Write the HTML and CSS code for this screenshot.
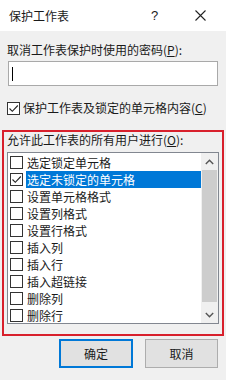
FILE: index.html
```html
<!DOCTYPE html>
<html lang="zh">
<head>
<meta charset="utf-8">
<link rel="stylesheet" href="styles.css">
</head>
<body>
<div class="dialog">
  <div class="titlebar">
    <span class="title">保护工作表</span>
    <span class="help">?</span>
    <span class="close"><svg width="11" height="11" viewBox="0 0 11 11"><path d="M0.5 0.5 L10.5 10.5 M10.5 0.5 L0.5 10.5" stroke="#222" stroke-width="1.1" fill="none"/></svg></span>
  </div>
  <div class="content">
    <div class="label">取消工作表保护时使用的密码(<u>P</u>):</div>
    <div class="input"><span class="caret"></span></div>
    <div class="chkrow">
      <span class="cb checked"><svg width="11" height="11" viewBox="0 0 11 11"><path d="M1.5 5.5 L4.3 8.3 L9.8 2.5" stroke="#222" stroke-width="1.1" fill="none"/></svg></span>
      <span>保护工作表及锁定的单元格内容(<u>C</u>)</span>
    </div>
    <div class="redbox">
      <div class="label2">允许此工作表的所有用户进行(<u>O</u>):</div>
      <div class="list">
        <div class="items">
          <div class="item"><span class="cb"></span><span class="txt">选定锁定单元格</span></div>
          <div class="item"><span class="cb checked"><svg width="11" height="11" viewBox="0 0 11 11"><path d="M1.5 5.5 L4.3 8.3 L9.8 2.5" stroke="#222" stroke-width="1.1" fill="none"/></svg></span><span class="txt sel">选定未锁定的单元格</span></div>
          <div class="item"><span class="cb"></span><span class="txt">设置单元格格式</span></div>
          <div class="item"><span class="cb"></span><span class="txt">设置列格式</span></div>
          <div class="item"><span class="cb"></span><span class="txt">设置行格式</span></div>
          <div class="item"><span class="cb"></span><span class="txt">插入列</span></div>
          <div class="item"><span class="cb"></span><span class="txt">插入行</span></div>
          <div class="item"><span class="cb"></span><span class="txt">插入超链接</span></div>
          <div class="item"><span class="cb"></span><span class="txt">删除列</span></div>
          <div class="item"><span class="cb"></span><span class="txt">删除行</span></div>
        </div>
        <div class="scroll">
          <div class="arrow"><svg width="9" height="6" viewBox="0 0 9 6"><path d="M0.8 5 L4.5 1.3 L8.2 5" stroke="#555" stroke-width="1.4" fill="none"/></svg></div>
          <div class="thumb"></div>
          <div class="track"></div>
          <div class="arrow"><svg width="9" height="6" viewBox="0 0 9 6"><path d="M0.8 1 L4.5 4.7 L8.2 1" stroke="#555" stroke-width="1.4" fill="none"/></svg></div>
        </div>
      </div>
    </div>
    <div class="buttons">
      <div class="btn primary">确定</div>
      <div class="btn">取消</div>
    </div>
  </div>
</div>
</body>
</html>
```
FILE: styles.css
```css
html, body {
  margin: 0;
  padding: 0;
}
body {
  width: 226px;
  height: 380px;
  overflow: hidden;
  font-family: "Noto Sans CJK SC", "Noto Sans", sans-serif;
  font-size: 12px;
  color: #1a1a1a;
  background: #f0f0f0;
}
.dialog {
  height: 380px;
  display: flex;
  flex-direction: column;
}
.titlebar {
  height: 31px;
  background: #fff;
  display: flex;
  align-items: center;
  padding-left: 9px;
}
.title {
  flex: 1;
  font-size: 12px;
}
.help {
  width: 12px;
  font-family: "Liberation Sans", sans-serif;
  font-size: 13px;
  margin-right: 32px;
}
.close {
  display: flex;
  margin-right: 20px;
}
.content {
  padding: 0 8px 0 7px;
  display: flex;
  flex-direction: column;
}
.label {
  margin-top: 11px;
  line-height: 16px;
  height: 16px;
}
u {
  text-decoration: underline;
  text-underline-offset: 1px;
}
.input {
  margin-top: 3px;
  margin-left: 1px;
  height: 23px;
  background: #fff;
  border: 1px solid #a9a9a9;
  display: flex;
  align-items: center;
  padding-left: 3px;
}
.caret {
  width: 1px;
  height: 14px;
  background: #000;
}
.chkrow {
  margin-top: 14px;
  height: 16px;
  line-height: 16px;
  display: flex;
  align-items: center;
  gap: 3px;
}
.cb {
  width: 11px;
  height: 11px;
  border: 1px solid #333;
  background: #fff;
  display: flex;
  flex: none;
}
.redbox {
  margin-top: 14px;
  margin-left: -5px;
  margin-right: -6px;
  border: 2px solid #d8202c;
  padding: 0 3px 10px 3px;
}
.label2 {
  line-height: 16px;
  height: 16px;
  padding-left: 0;
}
.list {
  margin-top: 4px;
  height: 170px;
  border: 1px solid #828790;
  background: #fff;
  display: flex;
}
.items {
  flex: 1;
  display: flex;
  flex-direction: column;
  padding-top: 1px;
}
.item {
  height: 17px;
  display: flex;
  align-items: center;
  padding-left: 2px;
}
.txt {
  margin-left: 3px;
  line-height: 17px;
  height: 17px;
  padding-left: 1px;
}
.txt.sel {
  flex: 1;
  background: #0078d7;
  color: #fff;
}
.scroll {
  width: 17px;
  background: #f0f0f0;
  display: flex;
  flex-direction: column;
}
.arrow {
  height: 17px;
  display: flex;
  align-items: center;
  justify-content: center;
}
.thumb {
  height: 132px;
  background: #cdcdcd;
  margin: 0 1px;
}
.track {
  flex: 1;
}
.buttons {
  margin-top: 3px;
  display: flex;
  justify-content: flex-end;
  gap: 12px;
}
.btn {
  width: 71px;
  height: 27px;
  border: 1px solid #adadad;
  background: #e1e1e1;
  display: flex;
  align-items: center;
  justify-content: center;
  font-size: 12px;
}
.btn.primary {
  width: 70px;
  height: 27px;
  border: 2px solid #0078d7;
  height: 25px;
}
```
